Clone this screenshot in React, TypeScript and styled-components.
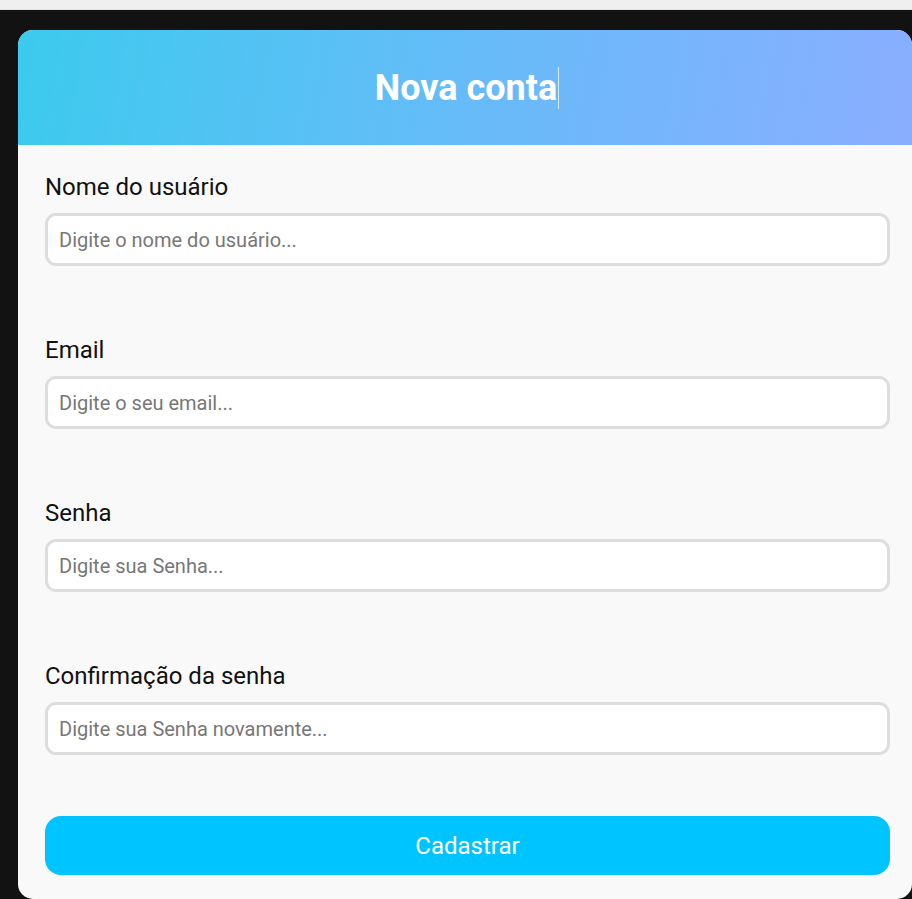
import React from "react";
import styled, { createGlobalStyle } from "styled-components";

const GlobalStyle = createGlobalStyle`
  * {
    box-sizing: border-box;
  }
  html, body {
    margin: 0;
    padding: 0;
    background: #121212;
    font-family: Roboto, "Liberation Sans", Arial, sans-serif;
  }
`;

interface Field {
  label: string;
  placeholder: string;
  type: string;
}

const fields: Field[] = [
  { label: "Nome do usuário", placeholder: "Digite o nome do usuário...", type: "text" },
  { label: "Email", placeholder: "Digite o seu email...", type: "email" },
  { label: "Senha", placeholder: "Digite sua Senha...", type: "password" },
  { label: "Confirmação da senha", placeholder: "Digite sua Senha novamente...", type: "password" },
];

const App: React.FC = () => {
  return (
    <>
      <GlobalStyle />
      <TopStrip />
      <Page>
        <Card>
          <Header>
            <Title>
              Nova conta
              <Caret />
            </Title>
          </Header>
          <Form onSubmit={(e) => e.preventDefault()}>
            {fields.map((field) => (
              <FieldGroup key={field.label}>
                <Label>{field.label}</Label>
                <Input type={field.type} placeholder={field.placeholder} />
              </FieldGroup>
            ))}
            <SubmitButton type="submit">Cadastrar</SubmitButton>
          </Form>
        </Card>
      </Page>
    </>
  );
};

export default App;

const TopStrip = styled.div`
  height: 10px;
  background: #efefef;
  border-bottom: 1px solid #e2e2e2;
`;

const Page = styled.div`
  background: #121212;
  padding: 20px 0 0 18px;
  min-height: 889px;
`;

const Card = styled.div`
  background: #f9f9f9;
  border-radius: 15px;
  overflow: hidden;
`;

const Header = styled.div`
  height: 115px;
  display: flex;
  align-items: center;
  justify-content: center;
  background: linear-gradient(100deg, #3ccaee 0%, #62bdf7 45%, #78b4fc 75%, #8aaeff 100%);
`;

const Title = styled.h1`
  margin: 0;
  display: flex;
  align-items: center;
  padding-left: 4px;
  color: #ffffff;
  font-size: 36px;
  font-weight: 700;
  line-height: 44px;
`;

const Caret = styled.span`
  display: inline-block;
  width: 1px;
  height: 42px;
  margin-left: 1px;
  background: rgba(235, 245, 255, 0.85);
`;

const Form = styled.form`
  display: flex;
  flex-direction: column;
  padding: 28px 22px 24px 27px;
`;

const FieldGroup = styled.div`
  display: flex;
  flex-direction: column;
  gap: 12px;
  margin-bottom: 70px;

  &:nth-last-of-type(1) {
    margin-bottom: 61px;
  }
`;

const Label = styled.label`
  font-size: 24px;
  line-height: 28px;
  color: #111111;
`;

const Input = styled.input`
  height: 53px;
  width: 100%;
  padding: 0 12px 0 11px;
  border: 3px solid #dddddd;
  border-radius: 11px;
  background: #ffffff;
  font-family: Roboto, "Liberation Sans", Arial, sans-serif;
  font-size: 20px;
  color: #222222;
  outline: none;

  &::placeholder {
    color: #777777;
  }
`;

const SubmitButton = styled.button`
  height: 59px;
  width: 100%;
  border: none;
  border-radius: 16px;
  background: #00c4ff;
  color: #ffffff;
  font-family: Roboto, "Liberation Sans", Arial, sans-serif;
  font-size: 24px;
  cursor: pointer;
`;
